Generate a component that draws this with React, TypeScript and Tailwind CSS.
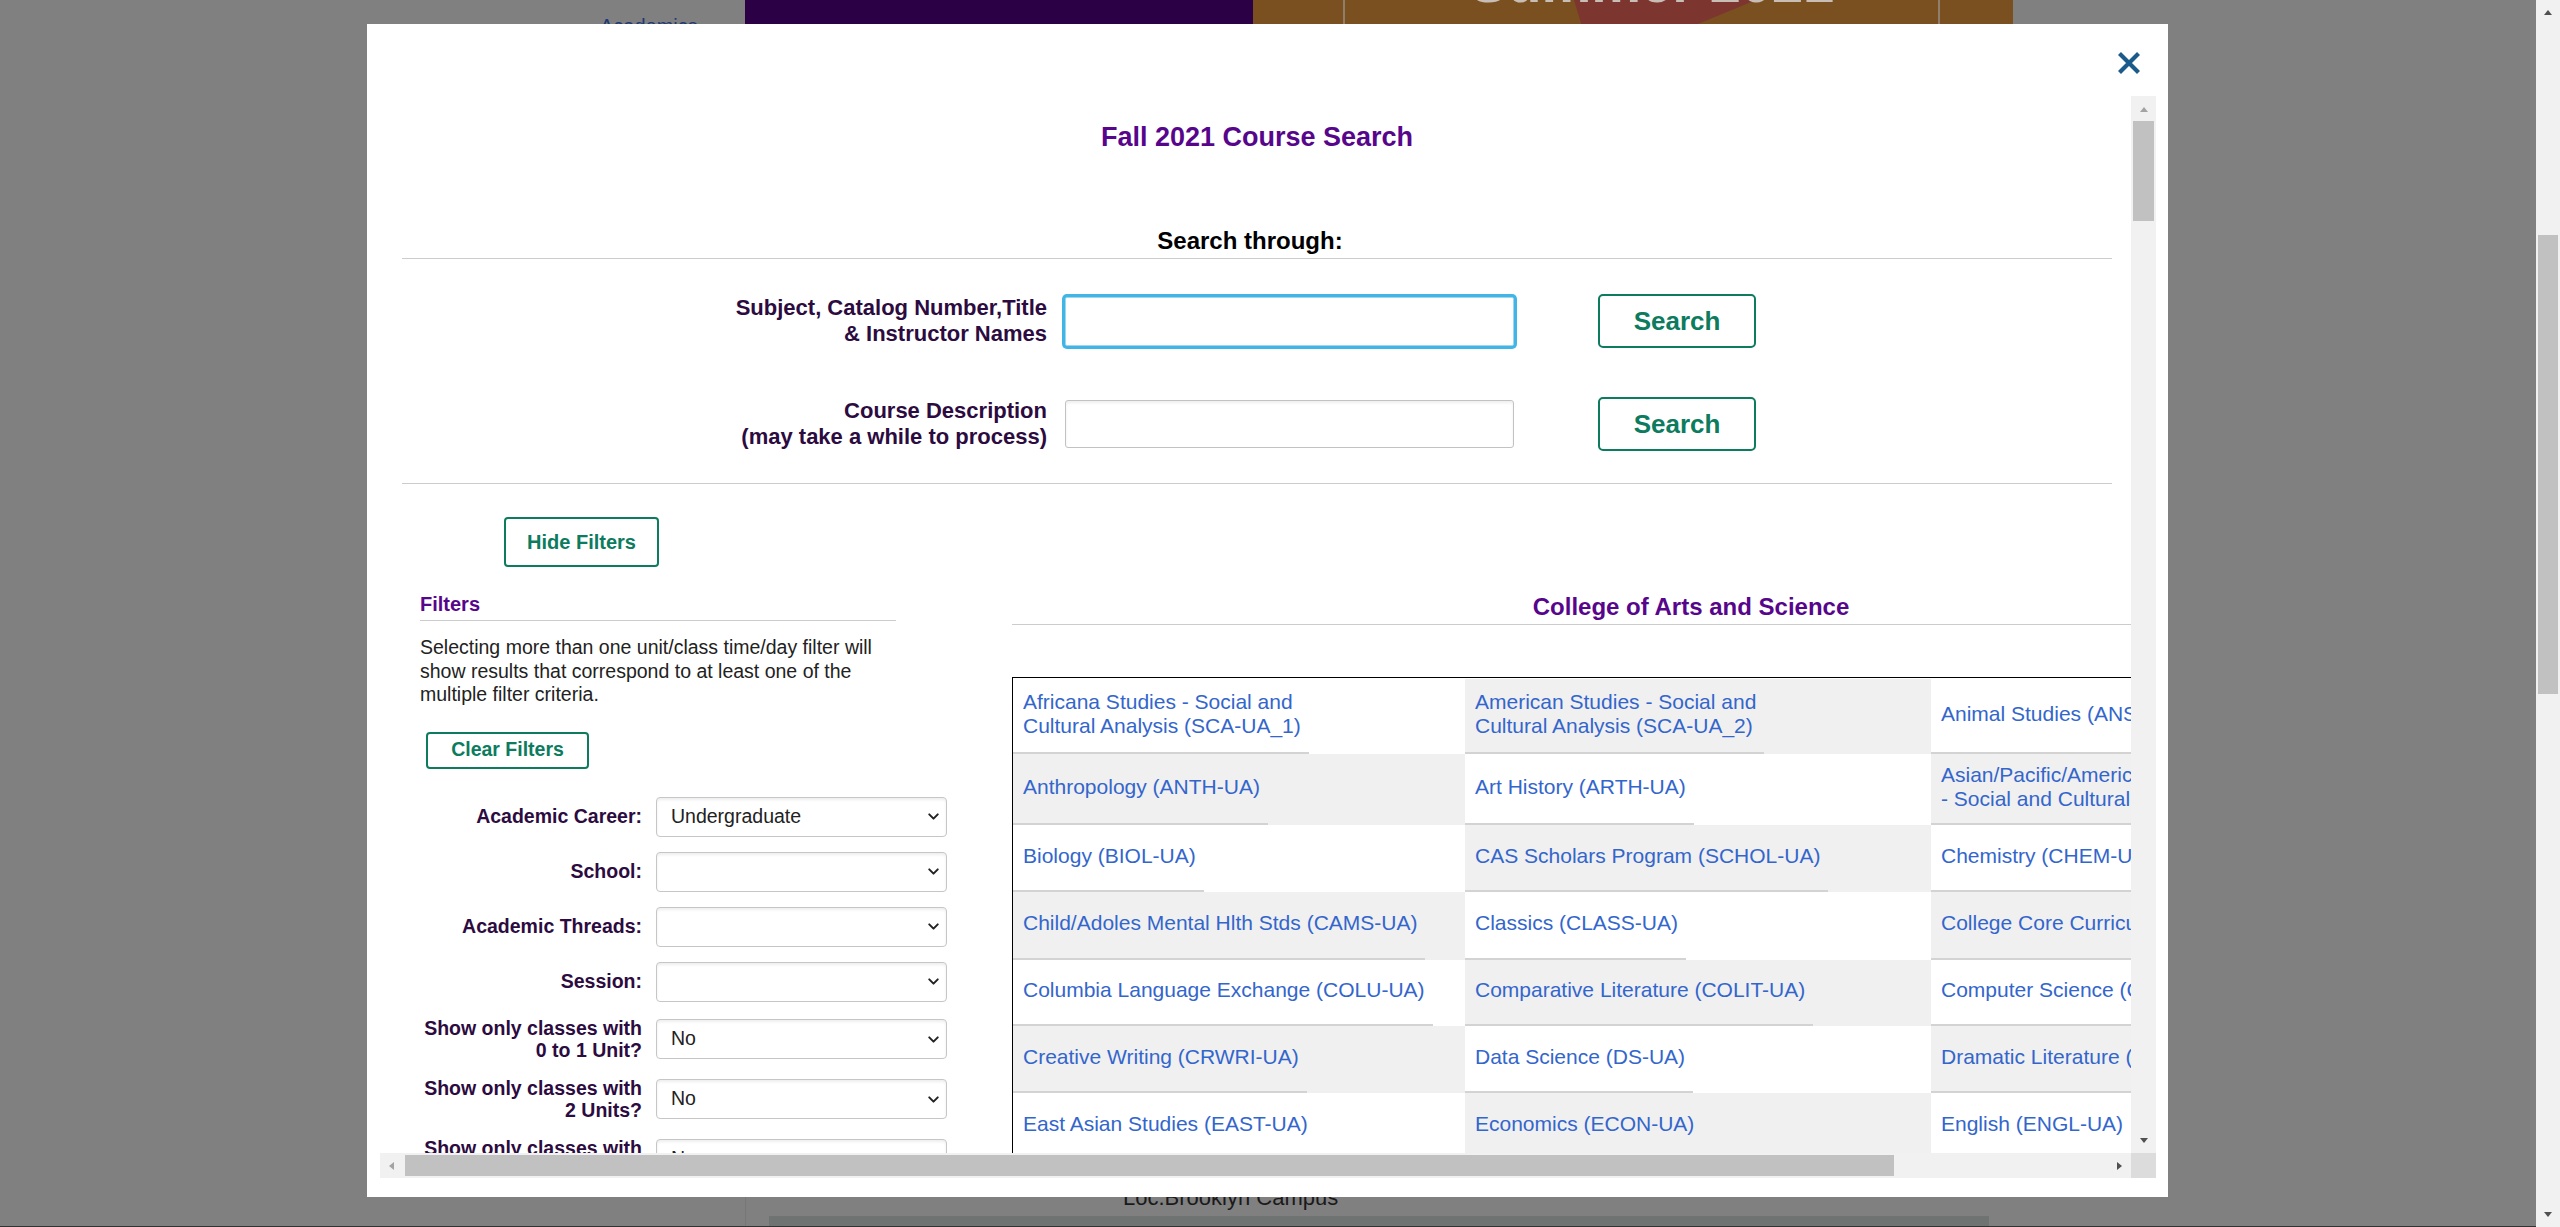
import { ChevronDown } from "lucide-react";

const courseRows: string[][][] = [
  [
    ["Africana Studies - Social and", "Cultural Analysis (SCA-UA_1)"],
    ["American Studies - Social and", "Cultural Analysis (SCA-UA_2)"],
    ["Animal Studies (ANST-UA)"],
  ],
  [
    ["Anthropology (ANTH-UA)"],
    ["Art History (ARTH-UA)"],
    ["Asian/Pacific/American Studies", "- Social and Cultural Analysis (SCA-UA_3)"],
  ],
  [["Biology (BIOL-UA)"], ["CAS Scholars Program (SCHOL-UA)"], ["Chemistry (CHEM-UA)"]],
  [
    ["Child/Adoles Mental Hlth Stds (CAMS-UA)"],
    ["Classics (CLASS-UA)"],
    ["College Core Curriculum (CORE-UA)"],
  ],
  [
    ["Columbia Language Exchange (COLU-UA)"],
    ["Comparative Literature (COLIT-UA)"],
    ["Computer Science (CSCI-UA)"],
  ],
  [["Creative Writing (CRWRI-UA)"], ["Data Science (DS-UA)"], ["Dramatic Literature (DRLIT-UA)"]],
  [["East Asian Studies (EAST-UA)"], ["Economics (ECON-UA)"], ["English (ENGL-UA)"]],
  [
    ["Environmental Studies (ENVST-UA)"],
    ["European and Mediterranean Studies (EURO-UA)"],
    ["Expository Writing (EXPOS-UA)"],
  ],
];

const rowHeights = ["h-[75px]", "h-[71px]", "h-[67px]", "h-[68px]", "h-[66px]", "h-[67px]", "h-[67px]", "h-[67px]"];

const filters = [
  { label: ["Academic Career:"], value: "Undergraduate" },
  { label: ["School:"], value: "" },
  { label: ["Academic Threads:"], value: "" },
  { label: ["Session:"], value: "" },
  { label: ["Show only classes with", "0 to 1 Unit?"], value: "No" },
  { label: ["Show only classes with", "2 Units?"], value: "No" },
  { label: ["Show only classes with", "3 Units?"], value: "No" },
  { label: ["Show only classes with", "4 Units?"], value: "No" },
];

function Arrow({ dir, color }: { dir: "up" | "down" | "left" | "right"; color: string }) {
  const pts = {
    up: "1,8 5,3 9,8",
    down: "1,2 5,7 9,2",
    left: "8,1 3,5 8,9",
    right: "2,1 7,5 2,9",
  }[dir];
  return (
    <svg width="10" height="10" viewBox="0 0 10 10">
      <polygon points={pts} fill={color} />
    </svg>
  );
}

function Select({ value }: { value: string }) {
  return (
    <div className="flex h-[40px] w-[291px] shrink-0 items-center justify-between rounded-[4px] border border-[#c6c6c6] bg-white pl-[14px] pr-[4px] text-[19.5px] text-[#222] shadow-[inset_0_2px_3px_rgba(0,0,0,0.07)]">
      <span>{value}</span>
      <ChevronDown className="h-[17px] w-[17px] text-[#222]" strokeWidth={2.8} />
    </div>
  );
}

function CourseCell({ lines, index }: { lines: string[]; index: number }) {
  return (
    <div className={index % 2 === 0 ? "flex h-full bg-white" : "flex h-full bg-[#f0f0f0]"}>
      <div className="inline-flex h-full items-center border-b-2 border-[#d3d3d3] pb-[4px] pl-[10px] pr-[8px]">
        <span className="whitespace-nowrap text-[21px] leading-[24px] text-[#3366cc]">
          {lines.map((l, i) => (
            <span key={i}>
              {i > 0 && <br />}
              {l}
            </span>
          ))}
        </span>
      </div>
    </div>
  );
}

function Content() {
  return (
    <div className="w-[2015px]">
      <div className="ml-[22px] w-[1710px]">
        <h1 className="pt-[26px] text-center text-[27px] font-bold leading-[31px] text-[#57068c]">
          Fall 2021 Course Search
        </h1>
        <div className="mt-[74px] pr-[14px] text-center text-[24px] font-bold leading-[27px] text-black">
          Search through:
        </div>
        <div className="mt-[4px] h-px bg-[#cccccc]" />

        <div className="mt-[35px] flex h-[54px] items-center pl-[245px]">
          <div className="w-[400px] text-right text-[22px] font-bold leading-[26px] text-[#2c0b40]">
            Subject, Catalog Number,Title
            <br />& Instructor Names
          </div>
          <div className="ml-[18px] h-[49px] w-[449px] rounded-[2px] border border-[#9fd6ec] bg-white shadow-[0_0_0_3px_#41b6e6]" />
          <button className="ml-[84px] h-[54px] w-[158px] rounded-[5px] border-2 border-[#0c7b5e] text-[26px] font-bold text-[#0c7b5e]">
            Search
          </button>
        </div>

        <div className="mt-[49px] flex h-[54px] items-center pl-[245px]">
          <div className="w-[400px] text-right text-[22px] font-bold leading-[26px] text-[#2c0b40]">
            Course Description
            <br />
            (may take a while to process)
          </div>
          <div className="ml-[18px] h-[48px] w-[449px] rounded-[3px] border border-[#c2c2c2] bg-white shadow-[inset_0_2px_3px_rgba(0,0,0,0.07)]" />
          <button className="ml-[84px] h-[54px] w-[158px] rounded-[5px] border-2 border-[#0c7b5e] text-[26px] font-bold text-[#0c7b5e]">
            Search
          </button>
        </div>

        <div className="mt-[32px] h-px bg-[#cccccc]" />

        <button className="ml-[102px] mt-[33px] h-[50px] w-[155px] rounded-[4px] border-2 border-[#0c7b5e] text-[20px] font-bold text-[#0c7b5e]">
          Hide Filters
        </button>
      </div>

      <div className="mt-[21px] flex items-start">
        <div className="ml-[40px] w-[530px] pt-[4px]">
          <div className="text-[20px] font-bold leading-[24px] text-[#57068c]">Filters</div>
          <div className="mt-[4px] h-px w-[476px] bg-[#cccccc]" />
          <p className="mt-[15px] w-[476px] text-[19.5px] leading-[23.5px] text-[#222]">
            Selecting more than one unit/class time/day filter will show results that correspond to at least one of the
            multiple filter criteria.
          </p>
          <button className="ml-[6px] mt-[25px] h-[37px] w-[163px] rounded-[4px] border-2 border-[#0c7b5e] text-[19.5px] font-bold text-[#0c7b5e]">
            Clear Filters
          </button>
          <div className="mt-[28px] flex flex-col gap-[15px]">
            {filters.map((f) => (
              <div key={f.label.join(" ")} className="flex items-center gap-[14px]">
                <div className="w-[222px] text-right text-[19.5px] font-bold leading-[22.5px] text-[#2c0b40]">
                  {f.label.map((l, i) => (
                    <span key={i}>
                      {i > 0 && <br />}
                      {l}
                    </span>
                  ))}
                </div>
                <Select value={f.value} />
              </div>
            ))}
          </div>
        </div>

        <div className="ml-[62px] w-[1358px] pt-[5px]">
          <div className="text-center text-[24px] font-bold leading-[28px] text-[#57068c]">College of Arts and Science</div>
          <div className="mt-[3px] h-px bg-[#cccccc]" />
          <div className="mt-[52px] border-l border-t border-black pt-px">
            {courseRows.map((row, r) => (
              <div key={r} className={`grid grid-cols-[452px_466px_440px] ${rowHeights[r]}`}>
                {row.map((cell, c) => (
                  <CourseCell key={c} lines={cell} index={r * 3 + c} />
                ))}
              </div>
            ))}
          </div>
        </div>
      </div>
    </div>
  );
}

function Modal() {
  return (
    <div className="flex h-[1173px] w-[1801px] flex-col bg-white pb-[19px] pl-[13px] pr-[12px]">
      <div className="flex h-[72px] items-start justify-end pr-[15px] pt-[27px]">
        <svg width="24" height="24" viewBox="0 0 24 24">
          <path d="M2.5 2.5 L21.5 21.5 M21.5 2.5 L2.5 21.5" stroke="#1b5b8c" strokeWidth="4.2" />
        </svg>
      </div>
      <div className="grid grid-cols-[1751px_25px] grid-rows-[1057px_25px]">
        <div className="overflow-hidden">
          <Content />
        </div>
        <div className="flex flex-col bg-[#f1f1f1]">
          <div className="flex h-[25px] items-center justify-center">
            <Arrow dir="up" color="#a3a3a3" />
          </div>
          <div className="mx-[2px] h-[100px] bg-[#c1c1c1]" />
          <div className="flex-1" />
          <div className="flex h-[25px] items-center justify-center">
            <Arrow dir="down" color="#505050" />
          </div>
        </div>
        <div className="flex bg-[#f1f1f1]">
          <div className="flex w-[22px] items-center justify-center">
            <Arrow dir="left" color="#a3a3a3" />
          </div>
          <div className="my-[2px] ml-[3px] w-[1489px] bg-[#c1c1c1]" />
          <div className="flex-1" />
          <div className="flex w-[22px] items-center justify-center">
            <Arrow dir="right" color="#505050" />
          </div>
        </div>
        <div className="bg-[#dcdcdc]" />
      </div>
    </div>
  );
}

function TopStrip() {
  return (
    <div className="flex h-[24px] overflow-hidden">
      <div className="w-[600px]" />
      <div className="w-[145px] pt-[14px] text-[20px] leading-[24px] text-[#1f3a73]">Academics</div>
      <div className="w-[508px] bg-[#2c0045]" />
      <div className="relative flex w-[760px] overflow-hidden bg-[#7a5020]">
        <div className="ml-[90px] w-[2px] bg-[#8f7e6c]" />
        <div className="ml-[229px] h-full w-[182px] bg-[#7d3530] [clip-path:polygon(0_0,100%_0,68%_100%,4%_100%)]" />
        <div className="ml-[182px] w-[2px] bg-[#8f7e6c]" />
        <div className="absolute left-[217px] top-[-45px] text-[56px] font-bold leading-[56px] text-[#c8beb5]">
          Summer 2021
        </div>
      </div>
    </div>
  );
}

function BottomStrip() {
  return (
    <div className="flex h-[30px] flex-col overflow-hidden">
      <div className="flex h-[29px]">
        <div className="w-[745px]" />
        <div className="w-[24px] border-l border-[#777]" />
        <div className="flex w-[1220px] flex-col">
          <div className="h-[19px] overflow-hidden">
            <div className="ml-[354px] mt-[-12px] text-[22px] leading-[26px] text-[#1a1a1a]">Loc.Brooklyn Campus</div>
          </div>
          <div className="flex-1 bg-[#6f7473]" />
        </div>
      </div>
      <div className="h-px bg-[#333]" />
    </div>
  );
}

function PageScrollbar() {
  return (
    <div className="flex w-[24px] flex-col bg-[#f1f1f1]">
      <div className="flex h-[24px] items-center justify-center">
        <Arrow dir="up" color="#505050" />
      </div>
      <div className="h-[211px]" />
      <div className="mx-[2px] h-[459px] bg-[#c1c1c1]" />
      <div className="flex-1" />
      <div className="flex h-[24px] items-center justify-center">
        <Arrow dir="down" color="#505050" />
      </div>
    </div>
  );
}

export default function App() {
  return (
    <div className="flex h-[1227px] w-[2560px] overflow-hidden font-['Liberation_Sans',Arial,sans-serif]">
      <div className="flex w-[2536px] flex-col bg-[#808080]">
        <TopStrip />
        <div className="flex h-[1173px]">
          <div className="w-[367px]" />
          <Modal />
        </div>
        <BottomStrip />
      </div>
      <PageScrollbar />
    </div>
  );
}
